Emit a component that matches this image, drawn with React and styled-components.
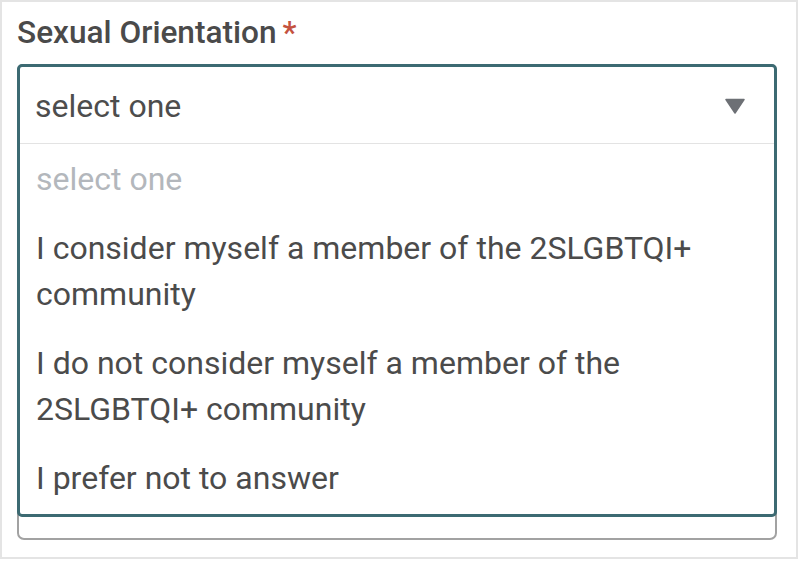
import React from "react";
import styled, { createGlobalStyle } from "styled-components";

const GlobalStyle = createGlobalStyle`
  html, body { margin: 0; padding: 0; background: #ffffff; }
  body { font-family: Roboto, "Liberation Sans", Arial, sans-serif; }
  * { box-sizing: border-box; }
`;

const Frame = styled.div`
  width: 798px;
  height: 559px;
  border: 2px solid #e4e4e4;
  padding: 12px 19px 0 15px;
  background: #fff;
`;

const Label = styled.div`
  display: flex;
  align-items: flex-start;
  font-size: 31.6px;
  line-height: 38px;
  font-weight: 500;
  color: #4a4a4a;
  margin-bottom: 12px;
`;

const Required = styled.span`
  color: #c4523f;
  margin-left: 6px;
  font-weight: 500;
`;

const SelectWrap = styled.div`
  position: relative;
  width: 760px;
`;

const BaseBox = styled.div`
  height: 476px;
  border: 2px solid #a2a2a2;
  border-radius: 7px;
  background: #fff;
`;

const Panel = styled.div`
  position: absolute;
  top: 0;
  left: 0;
  width: 760px;
  border: 3px solid #3c6a72;
  border-radius: 5px;
  background: #fff;
  padding-bottom: 2px;
`;

const Header = styled.div`
  height: 77px;
  display: flex;
  align-items: center;
  justify-content: space-between;
  padding: 2px 29px 0 15px;
  border-bottom: 1px solid #e3e3e3;
  font-size: 32px;
  color: #4d4d4d;
`;

const Option = styled.div`
  padding: 12px 15px 11px 16px;
  font-size: 32px;
  line-height: 46px;
  color: ${(p) => (p.$placeholder ? "#b3b7bc" : "#4b4b4b")};
`;

const Arrow = () => (
  <svg width="20" height="16" viewBox="0 0 20 16">
    <polygon points="1,1.5 19,1.5 10,15" fill="#6d7075" stroke="#6d7075" strokeWidth="1.5" strokeLinejoin="round" />
  </svg>
);

const options = [
  "I consider myself a member of the 2SLGBTQI+ community",
  "I do not consider myself a member of the 2SLGBTQI+ community",
  "I prefer not to answer",
];

export default function App() {
  return (
    <>
      <GlobalStyle />
      <Frame>
        <Label>
          Sexual Orientation<Required>*</Required>
        </Label>
        <SelectWrap>
          <BaseBox />
          <Panel>
            <Header>
              <span>select one</span>
              <Arrow />
            </Header>
            <Option $placeholder>select one</Option>
            {options.map((o) => (
              <Option key={o}>{o}</Option>
            ))}
          </Panel>
        </SelectWrap>
      </Frame>
    </>
  );
}
